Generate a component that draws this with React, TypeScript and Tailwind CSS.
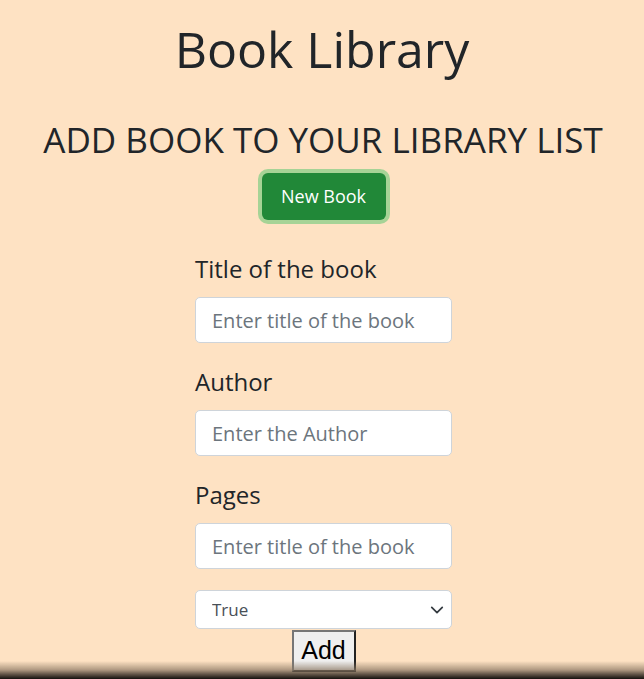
import React from 'react';

const fieldClass =
  'h-[46px] w-full rounded-[5px] border border-[#ced4da] bg-white px-4 text-[20px] text-[#495057] placeholder:text-[#6c757d] outline-none';

function Field({ label, placeholder }: { label: string; placeholder: string }) {
  return (
    <div className="flex flex-col">
      <label className="text-[24px] leading-[36px] text-[#212529]">{label}</label>
      <input type="text" placeholder={placeholder} className={`mt-[10px] ${fieldClass}`} />
    </div>
  );
}

export default function App() {
  return (
    <div
      className="relative min-h-[679px] bg-[#fee2c3] text-[#212529]"
      style={{ fontFamily: '"Open Sans", "Noto Sans", sans-serif' }}
    >
      <div className="flex flex-col items-center pt-[19px]">
        <h1 className="text-[50px] leading-[60px] font-normal">Book Library</h1>
        <h2 className="ml-[2px] mt-[40px] text-[35px] leading-[42px] font-normal">ADD BOOK TO YOUR LIBRARY LIST</h2>
        <button
          type="button"
          className="ml-[3px] mt-[12px] h-[47px] w-[124px] rounded-md bg-[#218838] text-[18px] text-white shadow-[0_0_0_4px_#a6d396]"
        >
          New Book
        </button>

        <form className="ml-[3px] mt-[31px] flex w-[257px] flex-col gap-[21px]">
          <Field label="Title of the book" placeholder="Enter title of the book" />
          <Field label="Author" placeholder="Enter the Author" />
          <Field label="Pages" placeholder="Enter title of the book" />
          <div className="relative">
            <select className="h-[39px] w-full appearance-none rounded-[5px] border border-[#ced4da] bg-white pl-4 text-[17px] text-[#495057] outline-none">
              <option>True</option>
              <option>False</option>
            </select>
            <svg
              viewBox="0 0 16 16"
              className="pointer-events-none absolute right-[8px] top-[13px] h-[14px] w-[14px]"
              fill="none"
              stroke="#343a40"
              strokeWidth="2"
              strokeLinecap="round"
              strokeLinejoin="round"
            >
              <path d="M2 5l6 6 6-6" />
            </svg>
          </div>
        </form>
        <button
          type="submit"
          className="ml-[3px] mt-[1px] h-[42px] w-[64px] border-2 border-[#767676] border-r-[#222] border-b-[#222] bg-[#efefef] text-[25px] text-black"
          style={{ fontFamily: '"Liberation Sans", Arial, sans-serif' }}
        >
          Add
        </button>
      </div>
      <div className="pointer-events-none fixed inset-x-0 bottom-0 h-[18px] bg-gradient-to-b from-transparent via-[#8a7763]/70 to-[#15110e]" />
    </div>
  );
}
